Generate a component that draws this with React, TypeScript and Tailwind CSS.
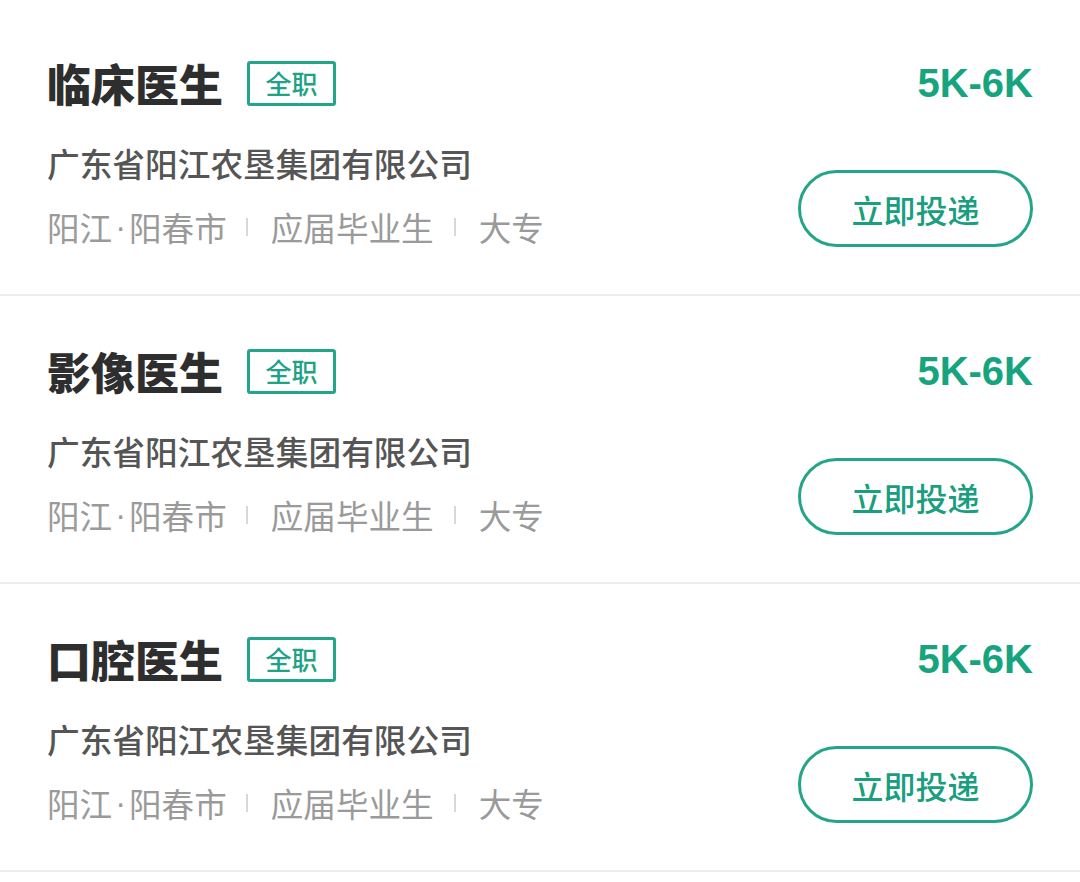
import React from "react";

const jobs = ["临床医生", "影像医生", "口腔医生"];

function Card({ title }: { title: string }) {
  return (
    <div className="flex h-[286px] justify-between bg-white px-[47px] pt-[52px]">
      <div className="flex flex-col">
        <div className="flex h-[46px] items-center">
          <span className="text-[44px] font-black leading-[46px] text-[#2e2e2e]">{title}</span>
          <span className="ml-[24px] flex h-[45px] w-[89px] items-center justify-center rounded-[3px] border-[3px] border-[#23a58a] text-[26px] font-medium leading-[30px] text-[#1fa386]">
            全职
          </span>
        </div>
        <div className="mt-[37px] text-[32.7px] font-medium leading-[40px] text-[#555555]">广东省阳江农垦集团有限公司</div>
        <div className="mt-[24px] flex items-center text-[32.6px] leading-[40px] text-[#9a9a9a]">
          <span>阳江</span>
          <span className="mx-[3px] font-['Liberation_Sans',sans-serif]">·</span>
          <span>阳春市</span>
          <span className="ml-[19px] mr-[23px] h-[18px] w-[2px] bg-[#d8d8d8]" />
          <span>应届毕业生</span>
          <span className="ml-[20px] mr-[23px] h-[18px] w-[2px] bg-[#d8d8d8]" />
          <span>大专</span>
        </div>
      </div>
      <div className="flex h-[187px] flex-col items-end justify-between">
        <div className="flex h-[46px] items-center font-['Liberation_Sans',sans-serif] text-[40px] font-bold leading-[46px] text-[#16a47f]">
          5K-6K
        </div>
        <div className="flex h-[77px] w-[235px] items-center justify-center rounded-full border-[3px] border-[#24a58a] text-[32px] font-medium leading-[40px] text-[#1a9e80]">
          立即投递
        </div>
      </div>
    </div>
  );
}

export default function App() {
  return (
    <div
      className="min-h-[882px] w-[1080px] bg-white"
      style={{ fontFamily: '"Noto Sans CJK SC", "Noto Sans", sans-serif' }}
    >
      <div className="h-[8px] bg-white" />
      {jobs.map((j) => (
        <div key={j}>
          <Card title={j} />
          <div className="h-[2px] bg-[#ececec]" />
        </div>
      ))}
    </div>
  );
}
